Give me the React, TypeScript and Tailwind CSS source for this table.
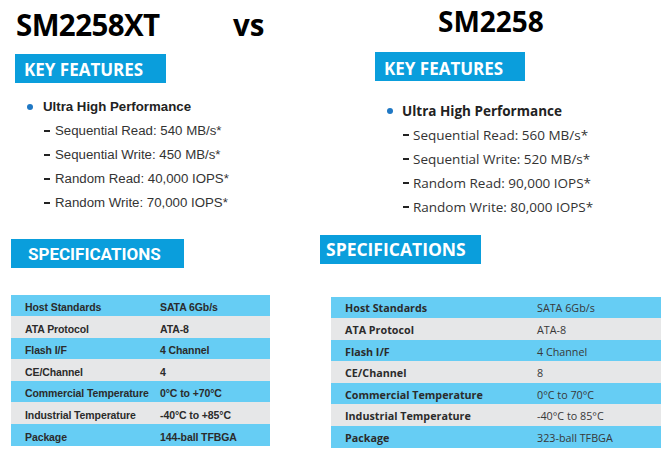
import React from 'react';

type Spec = { label: string; value: string };

const leftSpecs: Spec[] = [
  { label: 'Host Standards', value: 'SATA 6Gb/s' },
  { label: 'ATA Protocol', value: 'ATA-8' },
  { label: 'Flash I/F', value: '4 Channel' },
  { label: 'CE/Channel', value: '4' },
  { label: 'Commercial Temperature', value: '0°C to +70°C' },
  { label: 'Industrial Temperature', value: '-40°C to +85°C' },
  { label: 'Package', value: '144-ball TFBGA' },
];

const rightSpecs: Spec[] = [
  { label: 'Host Standards', value: 'SATA 6Gb/s' },
  { label: 'ATA Protocol', value: 'ATA-8' },
  { label: 'Flash I/F', value: '4 Channel' },
  { label: 'CE/Channel', value: '8' },
  { label: 'Commercial Temperature', value: '0°C to 70°C' },
  { label: 'Industrial Temperature', value: '-40°C to 85°C' },
  { label: 'Package', value: '323-ball TFBGA' },
];

const leftFeatures = [
  'Sequential Read: 540 MB/s*',
  'Sequential Write: 450 MB/s*',
  'Random Read: 40,000 IOPS*',
  'Random Write: 70,000 IOPS*',
];

const rightFeatures = [
  'Sequential Read: 560 MB/s*',
  'Sequential Write: 520 MB/s*',
  'Random Read: 90,000 IOPS*',
  'Random Write: 80,000 IOPS*',
];

const App = () => {
  return (
    <div className="w-[667px] h-[458px] bg-white flex overflow-hidden text-[#222]">
      {/* SM2258XT column */}
      <div className="w-[320px] shrink-0 font-['Liberation_Sans',Arial,sans-serif]">
        <div className="flex items-baseline pt-[7px] pl-[16px] font-['Open_Sans',sans-serif] font-bold text-black text-[29.5px] leading-[36px]">
          <span className="w-[217px] tracking-[-0.6px]">SM2258XT</span>
          <span>vs</span>
        </div>

        <div className="mt-[11px] ml-[15px] w-[151px] h-[29px] bg-[#0a9edc] flex items-center pl-[9px] pt-[2px] font-['Open_Sans',sans-serif] font-bold text-white text-[17px] leading-none">
          KEY FEATURES
        </div>

        <div className="mt-[12px] text-[13.25px] leading-[24px]">
          <div className="flex items-center pl-[27px]">
            <span className="w-[6px] h-[6px] rounded-full bg-[#1f78c4]" />
            <span className="ml-[10px] font-bold text-[#222]">Ultra High Performance</span>
          </div>
          {leftFeatures.map((f) => (
            <div key={f} className="flex items-center pl-[44px] text-[#333]">
              <span className="w-[6px] h-[2px] bg-[#222]" />
              <span className="ml-[5px]">{f}</span>
            </div>
          ))}
        </div>

        <div className="mt-[23.5px] ml-[11px] w-[173px] h-[29px] bg-[#0a9edc] flex items-center pl-[17px] pt-[2px] font-['Roboto',sans-serif] font-bold text-white text-[17px] leading-none">
          SPECIFICATIONS
        </div>

        <div className="mt-[27px] ml-[11px] w-[259px]">
          {leftSpecs.map((s, i) => (
            <div
              key={s.label}
              className={`flex items-center h-[21.6px] pt-[4px] text-[10.5px] leading-none font-bold tracking-[-0.1px] text-[#2b2b2b] ${
                i % 2 === 0 ? 'bg-[#66cdf4]' : 'bg-[#e6e7e8]'
              }`}
            >
              <span className="w-[149px] pl-[14px]">{s.label}</span>
              <span>{s.value}</span>
            </div>
          ))}
        </div>
      </div>

      {/* SM2258 column */}
      <div className="flex-1 font-['Open_Sans',sans-serif]">
        <div className="pt-[4px] pl-[118px] font-bold text-black text-[28px] leading-[34px]">SM2258</div>

        <div className="mt-[14px] ml-[55px] w-[150px] h-[29px] bg-[#0a9edc] flex items-center pl-[9px] pt-[3px] font-bold text-white text-[17px] leading-none">
          KEY FEATURES
        </div>

        <div className="mt-[17.5px] text-[13.5px] leading-[24px]">
          <div className="flex items-center pl-[67px]">
            <span className="w-[6px] h-[6px] rounded-full bg-[#1f78c4]" />
            <span className="ml-[9px] font-bold text-[#222]">Ultra High Performance</span>
          </div>
          {rightFeatures.map((f) => (
            <div key={f} className="flex items-center pl-[83px] text-[#333]">
              <span className="w-[6px] h-[2px] bg-[#222]" />
              <span className="ml-[4px]">{f}</span>
            </div>
          ))}
        </div>

        <div className="mt-[16px] w-[161px] h-[29px] bg-[#0a9edc] flex items-center pl-[6px] pt-[1px] font-bold text-white text-[17.5px] leading-none">
          SPECIFICATIONS
        </div>

        <div className="mt-[33px] ml-[11px] w-[330px]">
          {rightSpecs.map((s, i) => (
            <div
              key={s.label}
              className={`flex items-center h-[21.6px] pt-[3px] text-[10.75px] leading-none text-[#2b2b2b] ${
                i % 2 === 0 ? 'bg-[#66cdf4]' : 'bg-[#e6e7e8]'
              }`}
            >
              <span className="w-[206px] pl-[14px] font-bold">{s.label}</span>
              <span className="text-[#383838]">{s.value}</span>
            </div>
          ))}
        </div>
      </div>
    </div>
  );
};

export default App;
